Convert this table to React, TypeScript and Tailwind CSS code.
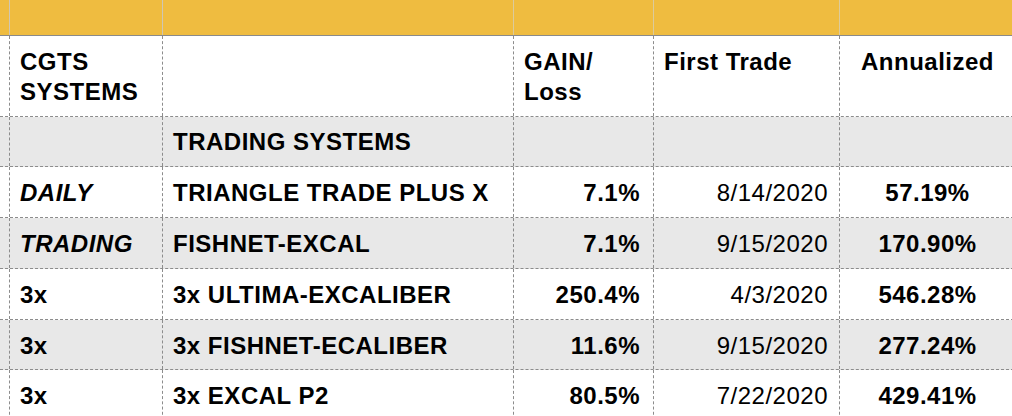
import React from "react";

type Row = {
  a: string;
  aItalic?: boolean;
  b: string;
  gain: string;
  date: string;
  ann: string;
  grey: boolean;
  h: string;
};

const rows: Row[] = [
  { a: "DAILY", aItalic: true, b: "TRIANGLE TRADE PLUS X", gain: "7.1%", date: "8/14/2020", ann: "57.19%", grey: false, h: "h-[51px]" },
  { a: "TRADING", aItalic: true, b: "FISHNET-EXCAL", gain: "7.1%", date: "9/15/2020", ann: "170.90%", grey: true, h: "h-[51px]" },
  { a: "3x", b: "3x ULTIMA-EXCALIBER", gain: "250.4%", date: "4/3/2020", ann: "546.28%", grey: false, h: "h-[51px]" },
  { a: "3x", b: "3x FISHNET-ECALIBER", gain: "11.6%", date: "9/15/2020", ann: "277.24%", grey: true, h: "h-[50px]" },
  { a: "3x", b: "3x EXCAL P2", gain: "80.5%", date: "7/22/2020", ann: "429.41%", grey: false, h: "h-[51px]" },
];

const cols = "grid grid-cols-[10px_153px_351px_140px_186px_175px]";
const dash = "border-b border-dashed border-[#8c8c8c]";
const vr = "border-r border-dashed border-[#8c8c8c]";

export default function App() {
  return (
    <div
      className="w-[1012px] h-[416px] overflow-hidden bg-white text-black tracking-[0.5px]"
      style={{ fontFamily: '"Liberation Sans", Arial, sans-serif' }}
    >
      <div className="w-[1014px]">
        {/* yellow header */}
        <div className={`${cols} h-[36px] bg-[#efbc40] border-b border-[#8a8a8a]`}>
          <div className="border-r border-[#cfc6b2]" />
          <div className="border-r border-[#cfc6b2]" />
          <div className="border-r border-[#dccb9c]" />
          <div className="border-r border-[#dccb9c]" />
          <div className="border-r border-[#dccb9c]" />
          <div />
        </div>

        {/* column headers */}
        <div className={`${cols} h-[81px] ${dash} bg-white text-[24px] leading-[30px] font-bold`}>
          <div className={vr} />
          <div className={`${vr} pl-[10px] pt-[11px]`}>
            CGTS
            <br />
            SYSTEMS
          </div>
          <div className={vr} />
          <div className={`${vr} pl-[10px] pt-[11px]`}>
            GAIN/
            <br />
            Loss
          </div>
          <div className={`${vr} pl-[10px] pt-[11px]`}>First Trade</div>
          <div className="pt-[11px] text-center">Annualized</div>
        </div>

        {/* section row */}
        <div className={`${cols} h-[50px] ${dash} bg-[#e8e8e8] text-[24px] leading-[30px] font-bold`}>
          <div className={vr} />
          <div className={vr} />
          <div className={`${vr} pl-[10px] flex items-center`}>TRADING SYSTEMS</div>
          <div className={vr} />
          <div className={vr} />
          <div />
        </div>

        {rows.map((r, i) => (
          <div
            key={i}
            className={`${cols} ${r.h} ${dash} ${r.grey ? "bg-[#e8e8e8]" : "bg-white"} text-[24px] leading-[30px]`}
          >
            <div className={vr} />
            <div className={`${vr} pl-[10px] pt-[2px] flex items-center font-bold ${r.aItalic ? "italic" : ""}`}>
              {r.a}
            </div>
            <div className={`${vr} pl-[10px] pt-[2px] flex items-center font-bold`}>{r.b}</div>
            <div className={`${vr} pr-[13px] pt-[2px] flex items-center justify-end font-bold`}>{r.gain}</div>
            <div className={`${vr} pr-[11px] pt-[2px] flex items-center justify-end`}>{r.date}</div>
            <div className="pt-[2px] flex items-center justify-center font-bold">{r.ann}</div>
          </div>
        ))}
      </div>
    </div>
  );
}
